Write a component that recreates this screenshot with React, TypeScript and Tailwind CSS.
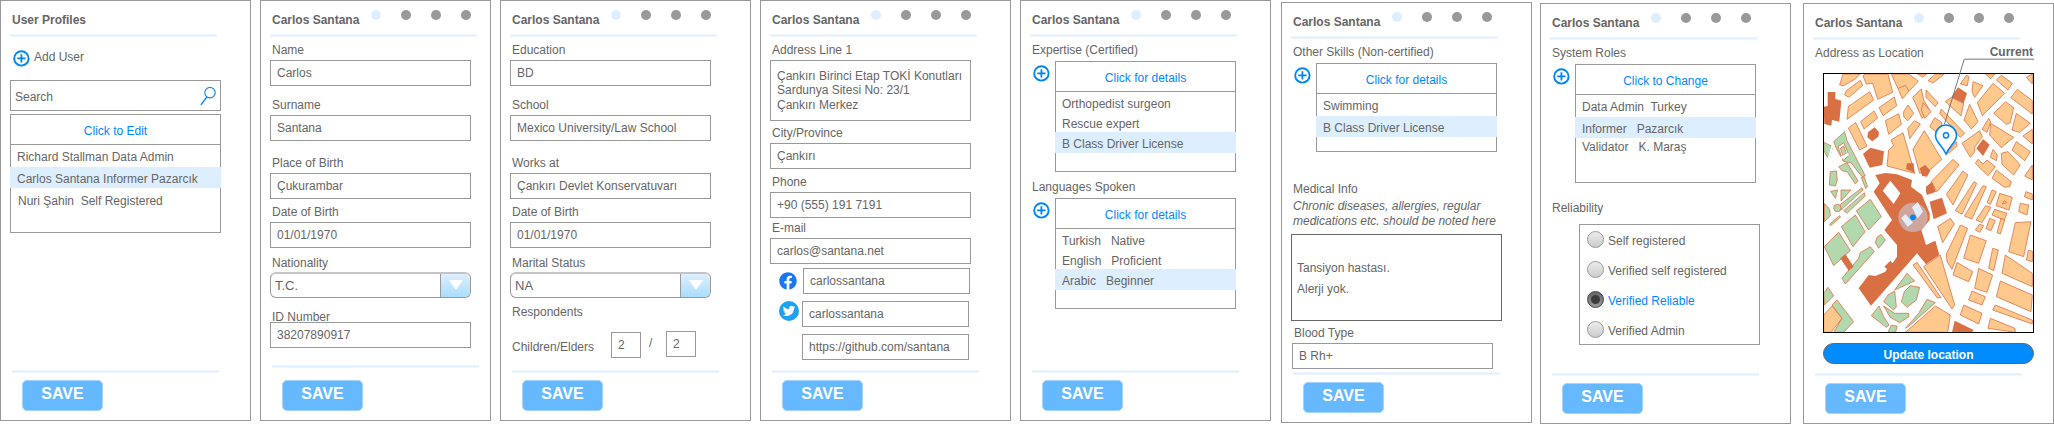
import React from 'react';
import { FaFacebook } from 'react-icons/fa';
import { clsx } from 'clsx';

type Kids = { children?: React.ReactNode; className?: string };

const Rule = ({ className }: { className?: string }) => (
  <div className={clsx('h-[3px] w-[207px] shrink-0 border-y border-[#eef6ff] bg-[#ddeeff]', className)} />
);

function Dots() {
  return (
    <div className="flex gap-[20.2px] pt-[0.3px]">
      <span className="size-[10px] rounded-full bg-[#ddeeff]" />
      <span className="size-[10px] rounded-full bg-[#999999]" />
      <span className="size-[10px] rounded-full bg-[#999999]" />
      <span className="size-[10px] rounded-full bg-[#999999]" />
    </div>
  );
}

function Panel({
  title = 'Carlos Santana',
  dots = true,
  className = 'w-[251px]',
  footer = 'pb-[48px]',
  children,
}: Kids & { title?: string; dots?: boolean; footer?: string }) {
  return (
    <section className={clsx('relative flex h-[421px] shrink-0 flex-col border border-[#999999] bg-white', className)}>
      <header className="flex h-[33px] shrink-0 items-start pl-[11px] pt-[9px]">
        <h2 className="mt-[3px] w-[98.7px] font-bold">{title}</h2>
        {dots && <Dots />}
      </header>
      <Rule className="ml-[9px]" />
      <div className="flex min-h-0 flex-1 flex-col items-start pl-[9px]">{children}</div>
      <footer className="flex shrink-0 flex-col pl-[11px]">
        <Rule className={footer === 'raised' ? 'mb-[12px]' : 'mb-[7px]'} />
        <button className="mb-[9px] ml-[10px] h-[31px] w-[81px] rounded-[5px] border border-[#a3d3ff] bg-[#66b8ff] pb-[3px] text-[16px] leading-[18px] font-bold text-white">
          SAVE
        </button>
      </footer>
    </section>
  );
}

const Label = ({ children, className }: Kids) => <div className={clsx('ml-[2px] shrink-0', className)}>{children}</div>;

const Box = ({ children, className = 'w-[201px]' }: Kids) => (
  <div className={clsx('flex h-[26px] shrink-0 items-center border border-[#999999] pl-[6px]', className)}>{children}</div>
);

function Field({ label, value, className, tight }: { label: string; value: string; className?: string; tight?: boolean }) {
  return (
    <div className={clsx('flex shrink-0 flex-col', className)}>
      <Label>{label}</Label>
      <Box className={tight ? '-mt-[2px] w-[201px]' : 'mt-[3px] w-[201px]'}>{value}</Box>
    </div>
  );
}

function Select({ label, value }: { label: string; value: string }) {
  return (
    <div className="mt-[8px] flex shrink-0 flex-col">
      <Label>{label}</Label>
      <div className="mt-[2px] flex h-[26px] w-[201px] overflow-hidden rounded-[6px] border border-t-2 border-[#999999] border-t-[#c4c4c4]">
        <span className="flex-1 pt-[5px] pl-[4px] text-[13px]">{value}</span>
        <span className="flex w-[30px] justify-center border-l border-[#999999] bg-linear-to-b from-[#ddeeff] to-[#aaddff] pt-[6px]">
          <svg width="14" height="10" viewBox="0 0 14 10">
            <path d="M0 0H14L7 10Z" fill="#fff" />
          </svg>
        </span>
      </div>
    </div>
  );
}

const Plus = ({ className }: { className?: string }) => (
  <svg className={clsx('shrink-0', className)} width="17" height="17" viewBox="0 0 17 17" fill="none" stroke="#0085f5">
    <circle cx="8.4" cy="8.4" r="7.2" strokeWidth="1.9" />
    <path d="M8.4 4.2V12.6M4.2 8.4H12.6" strokeWidth="1.8" />
  </svg>
);

function List({ head, children, className }: Kids & { head: string }) {
  return (
    <div className={clsx('flex shrink-0 flex-col border border-[#999999]', className)}>
      <div className="h-[30px] shrink-0 border-b border-[#999999] pt-[9px] text-center text-[#0088ff]">{head}</div>
      {children}
    </div>
  );
}

const Row = ({ children, className = 'h-[20px] pl-[6px]' }: Kids) => (
  <div className={clsx('shrink-0 pt-[5px]', className)}>{children}</div>
);
const Picked = ({ children, className = 'pl-[7px]' }: Kids) => (
  <div className={clsx('-mx-px h-[21px] shrink-0 bg-[#ddeeff] pt-[5px]', className)}>{children}</div>
);

function Radio({ label, on }: { label: string; on?: boolean }) {
  return (
    <label className={clsx('flex h-[30px] shrink-0 items-start pl-[7px]', on && 'text-[#0088ff]')}>
      {on ? (
        <span className="flex size-[17px] items-center justify-center rounded-full border border-[#444444] bg-linear-to-b from-[#666666] to-[#999999]">
          <span className="size-[9px] rounded-full bg-[#3c3c3c]" />
        </span>
      ) : (
        <span className="size-[17px] rounded-full border border-[#999999] bg-linear-to-b from-[#ececec] to-[#cccccc]" />
      )}
      <span className="mt-[3px] ml-[4px]">{label}</span>
    </label>
  );
}

const blocks = [
  '138,255 148,222 200,222 186,236 150,257', '153,285 158,272 200,241 207,256 166,292', '164,320 228,275 240,300 160,358',
  '208,228 214,222 283,222 297,277 252,298 237,250 218,252', '293,222 345,222 374,243 326,296 314,268', '256,323 302,291 309,317 268,347',
  '275,362 315,341 323,373 285,403', '201,365 241,333 252,354 211,387', '164,384 186,368 220,438 198,450',
  '292,420 328,398 363,520 280,498 285,450 300,437', '330,335 343,315 360,340 343,362 330,350', '342,385 363,362 380,372 348,416',
  '357,292 383,267 390,300 408,330 385,355', '397,270 433,308 425,320 397,292', '392,392 444,478 412,507 378,520 358,448',
  '403,242 425,222 452,222 418,249', '372,222 398,222 388,232', '500,252 518,226 526,230 521,257', '538,245 568,257 543,292 535,275',
  '473,292 510,310 502,348 455,305', '575,222 603,222 591,236', '608,240 623,226 656,250 643,270', '598,250 633,280 566,347 551,308',
  '698,232 716,222 716,252', '671,268 716,302 716,342 651,293', '600,340 636,305 660,323 650,368 638,373', '668,340 710,370 678,397 655,390',
  '528,313 553,365 533,387 511,360', '585,355 591,365 580,397 565,388', '591,370 660,412 623,443 588,405', '688,408 716,388 716,432',
  '668,425 710,455 693,482 655,450', '443,327 513,400 500,412 438,340', '388,308 412,335 393,355 383,330', '423,353 445,368 440,405 408,380',
  '505,430 558,392 566,410 543,442 543,455 530,472', '598,448 611,465 608,482 590,472', '545,490 553,478 568,492 580,480 605,500 583,527',
  '623,460 643,455 680,495 660,525 625,493', '608,510 653,545 648,560 633,562 595,535', '716,495 693,528 716,540', '458,462 488,425 490,437 468,458',
  '478,478 496,495 430,575 412,545', '508,513 523,525 478,615 458,583', '541,545 549,550 505,643 485,632', '568,557 578,560 535,657 512,648',
  '595,570 608,575 590,613 580,608', '618,580 656,592 646,630 607,617', '576,617 592,622 565,668 547,660', '603,628 640,640 632,660 595,645',
  '588,655 605,662 592,692 577,686', '622,655 633,660 620,702 610,698', '558,672 570,677 558,697 545,690', '640,608 632,602 626,612',
  '680,610 705,615 700,645 675,635', '697,575 716,582 716,600 692,590', '665,668 712,665 690,770 645,755', '432,680 470,655 482,672 447,728',
  '500,675 522,685 475,808 460,785 458,762', '530,705 578,722 555,790 510,775', '597,745 614,750 600,812 585,805', '704,750 716,754 716,785 698,780',
  '635,765 716,820 716,860 625,820', '555,805 597,825 580,877 543,865', '490,787 537,815 525,845 478,825', '620,843 716,885 712,935 608,890',
  '535,873 575,890 565,915 525,900', '605,915 716,960 716,972 597,930', '510,915 565,940 555,972 500,945', '590,955 664,985 665,997 583,985',
  '440,765 483,915 475,927 390,800', '358,795 370,787 442,893 430,893', '425,918 470,945 462,997 335,997', '90,945 115,918 145,955 112,997 90,997',
];

const parks = [
  '120,425 153,395 160,422 215,528 205,530 172,488 150,485 128,445', '135,500 160,488 193,543 185,552 160,515 145,512', '90,427 118,440 105,480 90,450',
  '110,515 128,513 131,540 125,558 107,555', '111,574 132,570 125,595', '142,570 172,570 142,603', '138,615 205,563 208,570 142,630',
  '150,632 212,578 214,588 160,640', '92,610 108,628 110,648 92,665', '108,672 138,647 140,652 111,677', '188,632 230,598 263,650 225,690',
  '143,680 185,645 214,695 178,740', '92,740 135,697 170,752 120,797', '245,728 250,712 262,703 275,720 255,745',
  '145,835 195,775 200,758 230,740 242,755 155,852', '90,880 103,862 120,888 92,915', '115,915 130,900 180,965 150,997 120,997 145,955',
  '340,820 363,843 303,870', '323,905 332,875 350,857 378,862 368,900 340,922', '283,885 303,873 308,920 300,930 270,905',
  '233,947 256,918 270,950 286,975 278,982', '270,918 303,940 345,940 346,950 318,968 290,952', '335,985 375,940 400,898 425,908 350,975',
  '283,997 293,975 310,978 306,997', '203,532 212,532 222,560 216,566',
];

const landmarks = [
  '102,276 125,276 125,297 143,302 137,365 115,360 113,377 92,372 90,320 102,318', '223,397 243,382 256,397 254,410 236,424 221,412',
  '208,462 230,443 271,454 266,495 228,503', '340,490 360,490 362,518 337,507', '378,505 395,495 410,512 400,530 385,528',
  '493,262 520,280 510,310 473,292', '568,417 588,434 568,468 548,445', '397,575 397,560 415,545 427,575 400,585', '408,605 445,593 460,640 420,658',
  '140,775 155,762 180,800 165,812', '483,962 540,990 535,997 475,997',
  '245,525 275,519 310,523 355,540 352,560 385,585 408,640 408,660 383,690 397,735 425,722 437,765 397,793 370,760 232,917 195,865 225,825 245,828 275,815 280,807 272,800 290,782 297,790 310,770 310,735 272,690 295,660 240,575 258,550',
];

const CityMap = () => (
  <svg className="mt-[13px] ml-[10px] shrink-0" width="211" height="260" viewBox="88 219 633 780">
    <rect x="88" y="219" width="633" height="780" fill="#fff" />
    <g stroke="#d97346" strokeWidth="2.4" strokeLinejoin="round">
      <g fill="#ffc88c">{blocks.map((p) => <polygon key={p} points={p} />)}</g>
      <path d="M314 265L335 256L346 273" fill="none" />
      <g fill="#b2d8ae">
        {parks.map((p) => <polygon key={p} points={p} />)}
        <circle cx="131" cy="624" r="11" />
      </g>
      <polygon points="133,440 150,428 166,466 148,482" fill="#fff" />
      <polygon points="140,445 150,438 158,460 148,468" fill="#b2d8ae" />
      <path d="M90 500L165 462M92 470L132 505M104 480L118 432" stroke="#fff" strokeWidth="6" />
    </g>
    <g fill="#d97043">{landmarks.map((p) => <polygon key={p} points={p} />)}</g>
    <polygon points="290,542 320,580 300,612 267,572" fill="#fff" />
    <circle cx="358" cy="652" r="44" fill="#cfa5a0" />
    <path d="M323 655L335 642L358 668L342 680ZM355 622L372 605L388 635L372 655Z" fill="#e3efff" />
    <circle cx="358" cy="652" r="8.5" fill="#0085f5" />
    <rect x="89.5" y="220.5" width="630" height="777" fill="none" stroke="#000" strokeWidth="3" />
  </svg>
);

/* Leader line and marker laid over the map */
const Callout = () => (
  <svg className="absolute top-[50px] left-[130px]" width="102" height="106" viewBox="0 0 102 106" fill="none">
    <path d="M30.5 5.3H100" stroke="#a3a3a3" strokeWidth="1.6" />
    <path d="M30.2 5.3L10.5 70" stroke="#777" strokeWidth="1" />
    <path d="M12 100C8 91 1.5 88.500 1.500 81.500A10.500 10.500 0 0 1 22.500 81.500C22.500 88.500 16 91 12 100Z" fill="#fff" stroke="#0085f5" strokeWidth="1.600" />
    <circle cx="12" cy="81.300" r="2.600" stroke="#0085f5" strokeWidth="1.500" />
  </svg>
);

export default function App() {
  return (
    <main className="flex h-[424px] w-[2054px] items-start overflow-hidden bg-white font-['Liberation_Sans',Arial,sans-serif] text-[12px] leading-[14px] whitespace-pre text-[#666666]">
      <Panel title="User Profiles" dots={false}>
        <div className="mt-[13px] ml-[3px] flex items-start">
          <Plus />
          <span className="ml-[4px]">Add User</span>
        </div>
        <div className="mt-[13px] flex h-[31px] w-[211px] shrink-0 items-start justify-between border border-[#999999] pt-[6px] pr-[4px] pl-[4px]">
          <span className="mt-[3px]">Search</span>
          <svg width="16" height="19" viewBox="0 0 16 19" fill="none" stroke="#0085f5" strokeWidth="1.1">
            <circle cx="10" cy="5.700" r="5.200" />
            <path d="M6.900 9.900L0.900 17.900" strokeWidth="1.400" />
          </svg>
        </div>
        <List head="Click to Edit" className="mt-[3px] h-[119px] w-[211px]">
          <Row className="h-[22px] pl-[6px]">Richard Stallman Data Admin</Row>
          <Picked>Carlos Santana Informer Pazarcık</Picked>
          <Row className="mt-px pl-[7px]">{'Nuri Şahin  Self Registered'}</Row>
        </List>
      </Panel>

      <Panel className="ml-[9px] w-[231px]" footer="raised">
        <Field className="mt-[6px]" label="Name" value="Carlos" />
        <Field className="mt-[12px]" label="Surname" value="Santana" />
        <Field className="mt-[15px]" label="Place of Birth" value="Çukurambar" />
        <Field className="mt-[6px]" label="Date of Birth" value="01/01/1970" />
        <Select label="Nationality" value="T.C." />
        <Field className="mt-[12px]" label="ID Number" value="38207890917" tight />
      </Panel>

      <Panel className="ml-[9px] w-[251px]">
        <Field className="mt-[6px]" label="Education" value="BD" />
        <Field className="mt-[12px]" label="School" value="Mexico University/Law School" />
        <Field className="mt-[15px]" label="Works at" value="Çankırı Devlet Konservatuvarı" />
        <Field className="mt-[6px]" label="Date of Birth" value="01/01/1970" />
        <Select label="Marital Status" value="NA" />
        <Label className="mt-[7px]">Respondents</Label>
        <div className="mt-[12px] flex items-start">
          <Label className="mt-[9px] w-[99px]">Children/Elders</Label>
          <Box className="mt-px w-[30px]">2</Box>
          <span className="mt-[5px] w-[25px] pl-[8px]">/</span>
          <Box className="w-[30px]">2</Box>
        </div>
      </Panel>

      <Panel className="ml-[9px] w-[251px]">
        <Label className="mt-[6px]">Address Line 1</Label>
        <div className="mt-[3px] h-[61px] w-[201px] shrink-0 border border-[#999999] pt-[8px] pl-[6px]">
          <div>Çankırı Birinci Etap TOKİ Konutları</div>
          <div>Sardunya Sitesi No: 23/1</div>
          <div className="mt-px">Çankırı Merkez</div>
        </div>
        <Field className="mt-[5px]" label="City/Province" value="Çankırı" />
        <Field className="mt-[6px]" label="Phone" value="+90 (555) 191 7191" />
        <Field className="mt-[3px]" label="E-mail" value="carlos@santana.net" />
        <div className="mt-[4px] flex items-center pl-[9px]">
          <FaFacebook size={18} color="#1877f2" />
          <Box className="ml-[6px] w-[167px]">carlossantana</Box>
        </div>
        <div className="mt-[7px] flex items-start pl-[9px]">
          <svg width="20" height="20" viewBox="0 0 40 40">
            <circle cx="20" cy="20" r="20" fill="#1da1f2" />
            <path
              transform="translate(7.500 7.500) scale(1.040)"
              fill="#fff"
              d="M23.950 4.570a10 10 0 01-2.820.770 4.960 4.960 0 002.160-2.720c-.950.550-2 .950-3.130 1.180a4.920 4.920 0 00-8.380 4.480C7.690 8.090 4.070 6.130 1.640 3.160a4.820 4.820 0 00-.670 2.480c0 1.710.870 3.210 2.190 4.100a4.900 4.900 0 01-2.230-.620v.060a4.920 4.920 0 003.950 4.830 5 5 0 01-2.210.080 4.940 4.940 0 004.600 3.420A9.870 9.870 0 010 19.540a14 14 0 007.550 2.210c9.050 0 14-7.500 14-13.980 0-.210 0-.420-.020-.630a9.940 9.940 0 002.460-2.550z"
            />
          </svg>
          <Box className="ml-[3px] w-[167px]">carlossantana</Box>
        </div>
        <Box className="mt-[7px] ml-[32px] w-[167px]">https://github.com/santana</Box>
      </Panel>

      <Panel className="ml-[9px] w-[251px]">
        <Label className="mt-[6px]">Expertise (Certified)</Label>
        <div className="mt-[4px] flex items-start">
          <Plus className="mt-[4px] mr-[5px] ml-[3px]" />
          <List head="Click for details" className="h-[111px] w-[181px]">
            <Row>Orthopedist surgeon</Row>
            <Row>Rescue expert</Row>
            <Picked>B Class Driver License</Picked>
          </List>
        </div>
        <Label className="mt-[8px]">Languages Spoken</Label>
        <div className="mt-[4px] flex items-start">
          <Plus className="mt-[4px] mr-[5px] ml-[3px]" />
          <List head="Click for details" className="h-[111px] w-[181px]">
            <Row>{'Turkish   Native'}</Row>
            <Row>{'English   Proficient'}</Row>
            <Picked>{'Arabic   Beginner'}</Picked>
          </List>
        </div>
      </Panel>

      <Panel className="mt-[2px] ml-[10px] w-[251px]">
        <Label className="mt-[6px]">Other Skills (Non-certified)</Label>
        <div className="mt-[4px] flex items-start">
          <Plus className="mt-[4px] mr-[5px] ml-[3px]" />
          <List head="Click for details" className="h-[89px] w-[181px]">
            <Row className="h-[22px] pl-[6px]">Swimming</Row>
            <Picked>B Class Driver License</Picked>
          </List>
        </div>
        <Label className="mt-[30px]">Medical Info</Label>
        <div className="mt-[3px] ml-[2px] leading-[15px] italic">
          <div>Chronic diseases, allergies, regular</div>
          <div>medications etc. should be noted here</div>
        </div>
        <div className="mt-[5px] h-[87px] w-[211px] shrink-0 border border-[#666666] pt-[26px] pl-[5px]">
          <div>Tansiyon hastası.</div>
          <div className="mt-[7px]">Alerji yok.</div>
        </div>
        <Field className="mt-[5px] ml-px" label="Blood Type" value="B Rh+" />
      </Panel>

      <Panel className="mt-[3px] ml-[8px] w-[251px]">
        <Label className="mt-[6px]">System Roles</Label>
        <div className="mt-[4px] flex items-start">
          <Plus className="mt-[4px] mr-[5px] ml-[3px]" />
          <List head="Click to Change" className="h-[119px] w-[181px]">
            <Row className="h-[22px] pl-[6px]">{'Data Admin  Turkey'}</Row>
            <Picked>{'Informer   Pazarcık'}</Picked>
            <Row className="-mt-[3px] pl-[6px]">{'Validator   K. Maraş'}</Row>
          </List>
        </div>
        <Label className="mt-[18px]">Reliability</Label>
        <div className="mt-[9px] ml-[29px] h-[121px] w-[181px] shrink-0 border border-[#999999] pt-[6px]">
          <Radio label="Self registered" />
          <Radio label="Verified self registered" />
          <Radio label="Verified Reliable" on />
          <Radio label="Verified Admin" />
        </div>
      </Panel>

      <Panel className="mt-[3px] ml-[12px] w-[251px]">
        <div className="mt-[6px] flex w-[220px] items-start justify-between">
          <Label>Address as Location</Label>
          <span className="-mt-px font-bold">Current</span>
        </div>
        <CityMap />
        <button className="mt-[10px] ml-[10px] h-[21px] w-[211px] shrink-0 rounded-full border border-[#666666] bg-[#008cff] pt-[3px] leading-[14px] font-bold text-white">
          Update location
        </button>
        <Callout />
      </Panel>
    </main>
  );
}
